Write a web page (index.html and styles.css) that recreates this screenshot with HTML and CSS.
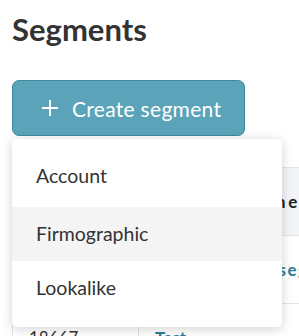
FILE: index.html
```html
<!DOCTYPE html>
<html lang="en">
<head>
  <meta charset="UTF-8">
  <meta name="viewport" content="width=device-width, initial-scale=1">
  <title>Segments</title>
  <link rel="stylesheet" href="styles.css">
</head>
<body>

<div class="page">
  <h1 class="title">Segments</h1>

  <div class="actions">
    <button class="create-btn">
      <svg class="plus" width="18" height="18" viewBox="0 0 18 18">
        <path d="M9 1v16M1 9h16" stroke="#fff" stroke-width="2" fill="none"/>
      </svg>
      Create segment
    </button>

    <ul class="menu">
      <li class="menu-item">Account</li>
      <li class="menu-item active">Firmographic</li>
      <li class="menu-item">Lookalike</li>
    </ul>
  </div>

  <table class="segments">
    <colgroup>
      <col class="col-id">
      <col class="col-name">
    </colgroup>
    <tr>
      <th class="cell-id">ID</th>
      <th>Segment name</th>
    </tr>
    <tr>
      <td class="cell-id">18702</td>
      <td><a href="#" class="wide">Firmographic segment</a></td>
    </tr>
    <tr>
      <td class="cell-id">18667</td>
      <td><a href="#">Test</a></td>
    </tr>
  </table>
</div>

</body>
</html>
```

FILE: styles.css
```css
*, *::before, *::after {
  box-sizing: border-box;
}

body {
  margin: 0;
  font-family: Lato, "Open Sans", sans-serif;
  background: #ffffff;
  color: #333;
  overflow: hidden;
}

.page {
  padding: 12px;
}

.title {
  margin: 0;
  font-size: 31px;
  font-weight: 700;
  line-height: 34px;
  color: #333;
}

.actions {
  position: relative;
  margin-top: 34px;
}

.create-btn {
  display: flex;
  align-items: center;
  gap: 13px;
  width: 233px;
  height: 56px;
  padding: 0 0 0 28px;
  background: #5ba3b9;
  border: 1px solid #3e8aa1;
  border-radius: 7px;
  color: #fff;
  font-family: inherit;
  font-size: 21px;
  letter-spacing: 0.3px;
  cursor: pointer;
}

.menu {
  position: absolute;
  top: 59px;
  left: 0;
  width: 270px;
  margin: 0;
  padding: 12px 0 12px;
  list-style: none;
  background: #fff;
  border-radius: 5px;
  box-shadow: 0 2px 12px rgba(0,0,0,0.18);
  z-index: 2;
}

.menu-item {
  height: 54px;
  line-height: 54px;
  padding-left: 24px;
  font-size: 19.5px;
  color: #333;
}

.menu-item:first-child {
  height: 56px;
  line-height: 50px;
}

.menu-item.active {
  background: #f4f4f4;
}

.segments {
  width: 420px;
  table-layout: fixed;
  margin-top: 31px;
  border-collapse: collapse;
  font-size: 17px;
}

.col-id {
  width: 126px;
}

.segments th, .segments td {
  height: 68px;
  padding: 0 16px;
  text-align: left;
  border-top: 1px solid #e2e4e8;
  white-space: nowrap;
  overflow: hidden;
}

.segments th {
  background: #f4f5f8;
  font-weight: 700;
  color: #222;
  letter-spacing: 2.75px;
}

.segments .cell-id {
  border-left: 1px solid #dfe1e5;
  border-right: 1px solid #dfe1e5;
}

.segments a {
  color: #2c7d97;
  font-weight: 700;
  text-decoration: none;
}

.segments a.wide {
  letter-spacing: 1.5px;
}
```
